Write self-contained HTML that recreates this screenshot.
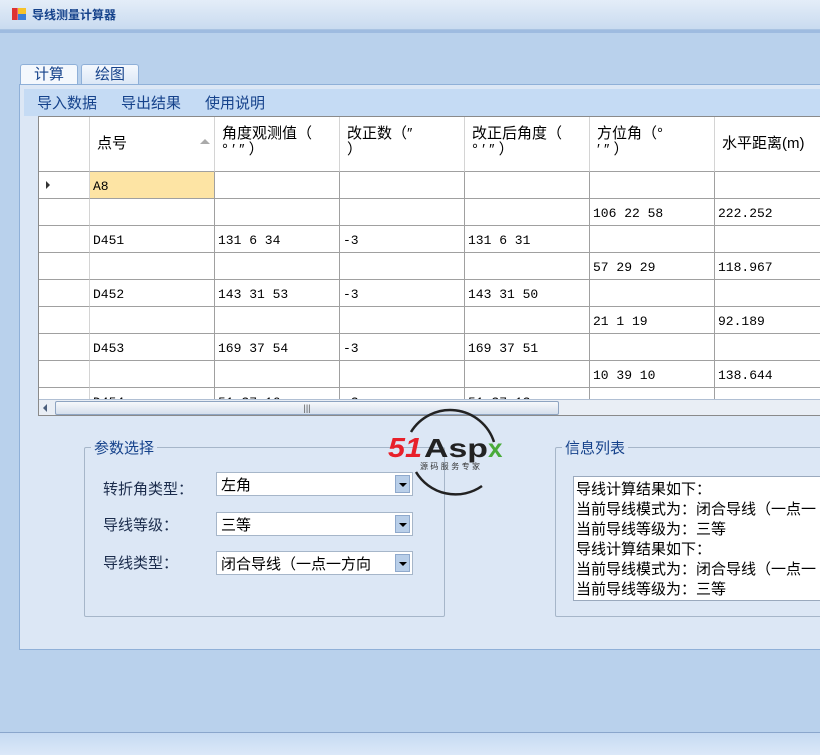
<!DOCTYPE html>
<html><head><meta charset="utf-8"><style>
*{margin:0;padding:0;box-sizing:border-box}
body{width:820px;height:755px;overflow:hidden;background:#b9d1ec;font-family:"Liberation Sans","Noto Sans CJK SC","WenQuanYi Zen Hei",sans-serif;font-size:14px;color:#000;position:relative}
.abs{position:absolute}
.title{left:0;top:0;width:820px;height:30px;background:linear-gradient(#e4edf8,#c9dbf0);border-bottom:1px solid #a9c3e2}
.title span{position:absolute;left:32px;top:6px;font-size:12px;font-weight:bold;color:#15428b}
.tab{top:64px;height:21px;border:1px solid #8fb0d8;border-bottom:none;border-radius:3px 3px 0 0;background:linear-gradient(#f5f9fe,#dbe7f6);font-size:15px;color:#15428b;text-align:center;line-height:19px}
.page{left:19px;top:84px;width:801px;height:566px;background:#dce7f5;border:1px solid #8fb0d8;border-right:none}
.menu{left:24px;top:89px;width:796px;height:27px;background:#c5dbf4}
.menu span{position:absolute;top:3px;font-size:15px;color:#15428b}
.grid{left:38px;top:116px;width:782px;height:300px;background:#fff;border:1px solid #8a8a8a;border-right:none;overflow:hidden}
.cell{position:absolute;border-right:1px solid #a0a0a0;border-bottom:1px solid #a0a0a0;font-family:"Liberation Mono","Noto Sans CJK SC",monospace;font-size:13px;padding:7px 0 0 3px;height:27px}
.hd{position:absolute;top:0;height:55px;border-right:1px solid #d4d4d4;border-bottom:1px solid #a0a0a0;font-size:15px;padding:9px 0 0 7px;line-height:16px;background:#fff}
.gb{border:1px solid #a6b6c9;border-radius:2px}
.gbt{font-size:15px;color:#15428b;background:#dce7f5;padding:0 3px;top:-11px}
.combo{width:197px;height:24px;border:1px solid #a6b6c9;background:#fff;font-size:15px;padding:1px 0 0 4px}
.combo b{position:absolute;right:2px;top:2px;width:15px;height:18px;background:#b9cfe9;border:1px solid #8fa9cc}
.combo b:after{content:"";position:absolute;left:3px;top:7px;border:4px solid transparent;border-top:4px solid #000;border-bottom:none}
.lbl{font-size:15px;color:#1b2c4c}
</style></head><body>
<div class="abs title"><div class="abs" style="left:12px;top:8px;width:14px;height:12px;background:linear-gradient(90deg,#d33 0 40%,#f9b 40%);"><div style="position:absolute;left:6px;top:0;width:8px;height:6px;background:#f6c22a"></div><div style="position:absolute;left:6px;top:6px;width:8px;height:6px;background:#3a7ed8"></div></div><span>导线测量计算器</span></div>
<div class="abs" style="left:0;top:30px;width:820px;height:3px;background:#9ebbe0"></div>
<div class="abs tab" style="left:20px;width:58px;background:#f4f8fd;height:22px">计算</div>
<div class="abs tab" style="left:81px;width:58px">绘图</div>
<div class="abs page"></div>
<div class="abs menu"><span style="left:13px">导入数据</span><span style="left:97px">导出结果</span><span style="left:181px">使用说明</span></div>
<div class="abs grid">
<div class="hd" style="left:0;width:51px"></div>
<div class="hd" style="left:51px;width:125px;padding-top:19px">点号<span style="position:absolute;right:4px;top:22px;border:5px solid transparent;border-bottom:5px solid #aaa;border-top:none"></span></div>
<div class="hd" style="left:176px;width:125px">角度观测值（<br>° ′ ″ ）</div>
<div class="hd" style="left:301px;width:125px">改正数（″<br>）</div>
<div class="hd" style="left:426px;width:125px">改正后角度（<br>° ′ ″ ）</div>
<div class="hd" style="left:551px;width:125px">方位角（°<br>′ ″ ）</div>
<div class="hd" style="left:676px;width:125px;padding-top:19px">水平距离(m)</div>
<div id="rows"></div>
<div class="abs" style="left:0;top:282px;width:782px;height:17px;background:#e9eef5;border-top:1px solid #b0bfd3"><div class="abs" style="left:16px;top:1px;width:504px;height:14px;background:linear-gradient(#f6f8fb,#d5dfec);border:1px solid #8ea4c1;border-radius:2px;font-size:9px;text-align:center;line-height:12px;color:#555">|||</div><div class="abs" style="left:4px;top:4px;border:4px solid transparent;border-right:4px solid #4a5e7c;border-left:none"></div></div>
</div>
<div class="abs gb" style="left:84px;top:447px;width:361px;height:170px"><span class="abs gbt" style="left:6px">参数选择</span></div>
<div class="abs lbl" style="left:103px;top:478px">转折角类型：</div>
<div class="abs lbl" style="left:103px;top:514px">导线等级：</div>
<div class="abs lbl" style="left:103px;top:552px">导线类型：</div>
<div class="abs combo" style="left:216px;top:472px">左角<b></b></div>
<div class="abs combo" style="left:216px;top:512px">三等<b></b></div>
<div class="abs combo" style="left:216px;top:551px;white-space:nowrap;overflow:hidden">闭合导线（一点一方向<b></b></div>
<div class="abs gb" style="left:555px;top:447px;width:280px;height:170px"><span class="abs gbt" style="left:6px">信息列表</span></div>
<div class="abs" style="left:573px;top:476px;width:260px;height:125px;background:#fff;border:1px solid #9aa9bd;font-size:15px;line-height:20px;padding:3px 0 0 2px;white-space:nowrap;overflow:hidden">导线计算结果如下：<br>当前导线模式为：闭合导线（一点一<br>当前导线等级为：三等<br>导线计算结果如下：<br>当前导线模式为：闭合导线（一点一<br>当前导线等级为：三等</div>
<svg class="abs" style="left:386px;top:402px" width="130" height="95"><path d="M25 30 A46 46 0 0 1 108 40" fill="none" stroke="#222" stroke-width="2.5"/><path d="M30 70 A46 46 0 0 0 96 84" fill="none" stroke="#222" stroke-width="2.5"/><text x="2" y="55" font-family="Liberation Sans" font-style="italic" font-weight="bold" font-size="28" fill="#e8202a" textLength="34" lengthAdjust="spacingAndGlyphs">51</text><text x="38" y="55" font-family="Liberation Sans" font-weight="bold" font-size="26" fill="#222" textLength="64" lengthAdjust="spacingAndGlyphs">Asp</text><text x="102" y="55" font-family="Liberation Sans" font-weight="bold" font-size="26" fill="#4aab3a">x</text><text x="34" y="67" font-family="Noto Sans CJK SC" font-size="8" fill="#333" textLength="60">源码服务专家</text></svg>
<div class="abs" style="left:0;top:732px;width:820px;height:23px;background:linear-gradient(#c6daf2,#dbe8f8);border-top:1px solid #8aa6cc"></div>
<script>
var rows=[["A8","","","","",""],["","","","","106 22 58","222.252"],["D451","131 6 34","-3","131 6 31","",""],["","","","","57 29 29","118.967"],["D452","143 31 53","-3","143 31 50","",""],["","","","","21 1 19","92.189"],["D453","169 37 54","-3","169 37 51","",""],["","","","","10 39 10","138.644"],["D454","51 37 16","-3","51 37 13","",""]];
var h="";rows.forEach(function(r,i){var t=55+i*27;h+='<div class="cell" style="left:0;top:'+t+'px;width:51px;border-right-color:#d4d4d4">'+(i==0?'<span style="position:absolute;left:7px;top:9px;border:4px solid transparent;border-left:4px solid #333;border-right:none"></span>':'')+'</div>';r.forEach(function(c,j){h+='<div class="cell" style="left:'+(51+j*125)+'px;top:'+t+'px;width:125px;'+(i==0&&j==0?'background:#fde4a4':'')+'">'+c+'</div>';});});
document.getElementById("rows").innerHTML=h;
</script>
</body></html>
